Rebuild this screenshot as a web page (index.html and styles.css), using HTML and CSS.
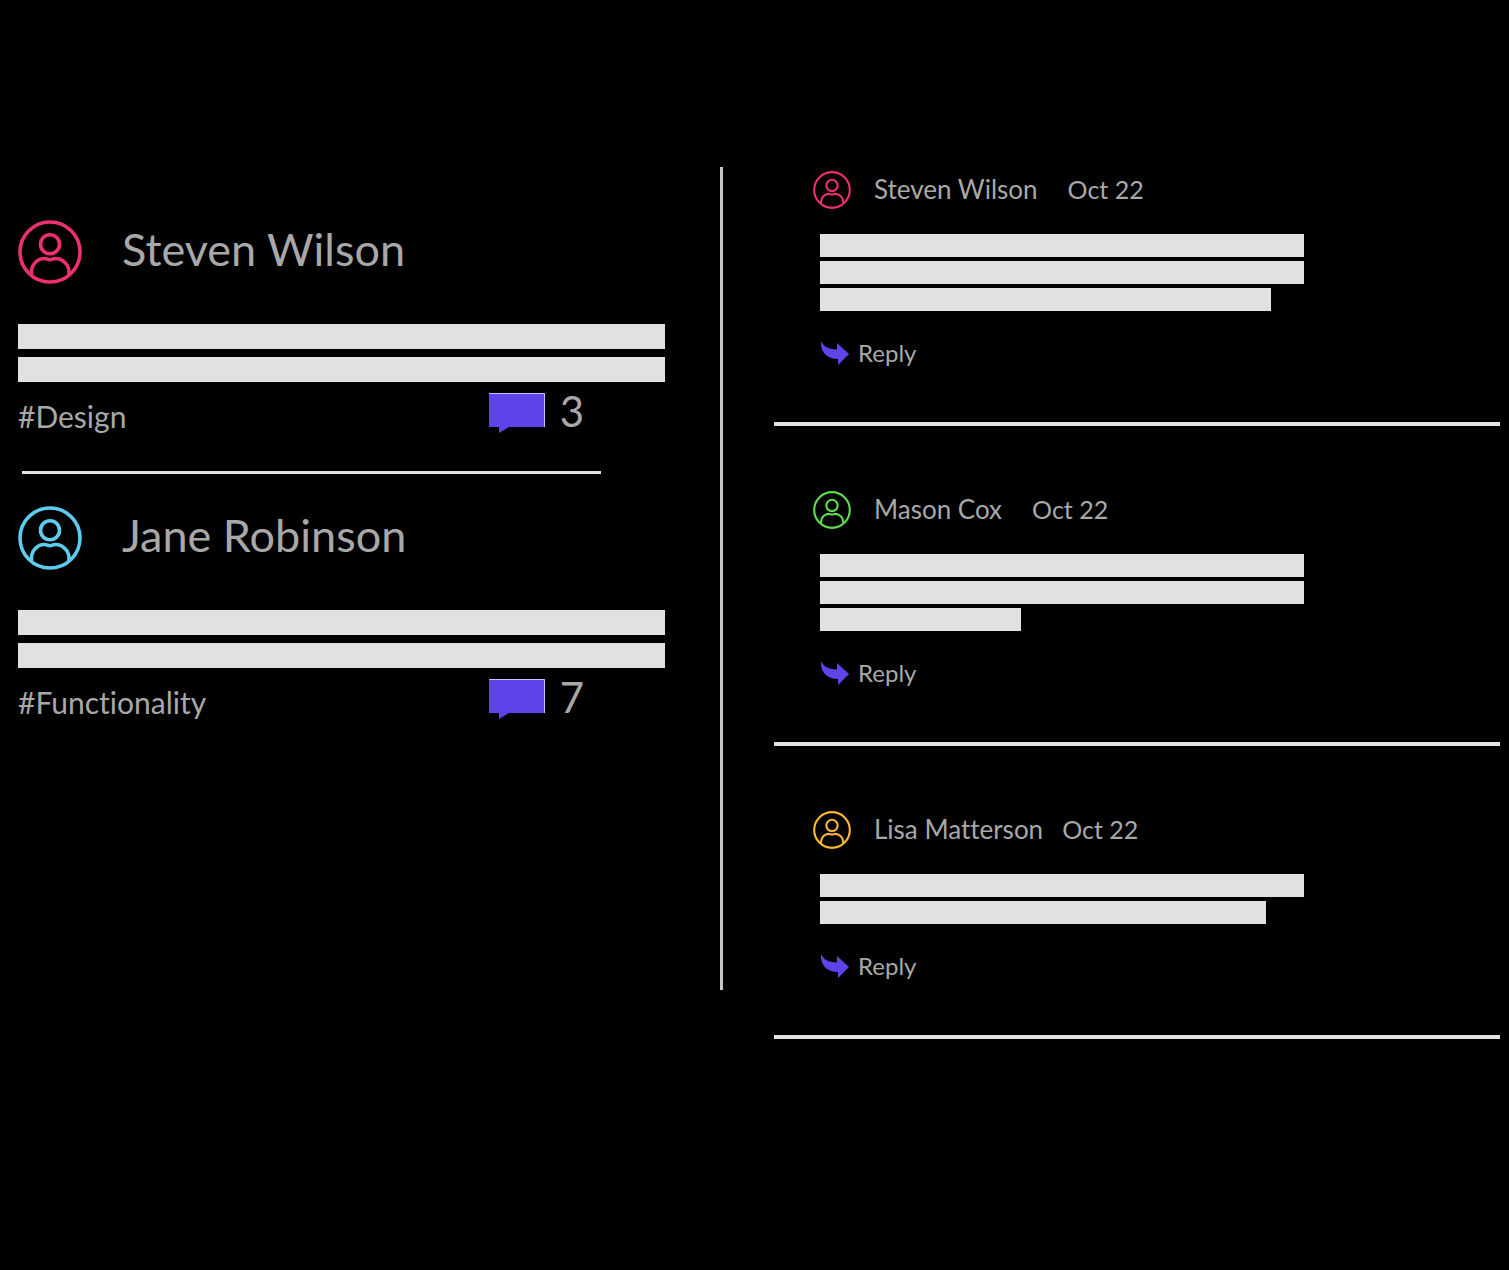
FILE: index.html
```html
<!DOCTYPE html>
<html lang="en">
<head>
<meta charset="utf-8">
<meta name="viewport" content="width=device-width, initial-scale=1">
<title>Discussion</title>
<link rel="stylesheet" href="styles.css">
</head>
<body>
<svg class="sprite" aria-hidden="true">
  <symbol id="avatar" viewBox="0 0 64 64">
    <g fill="none" stroke="currentColor" stroke-width="3.600">
      <circle cx="32" cy="32" r="30"/>
      <circle cx="32" cy="24.300" r="9.500"/>
      <path d="M13.500 54.500V52C13.500 44.500 19.500 38.500 26.500 38.500C29 38.500 30 39.700 32 39.700S35 38.500 37.500 38.500C44.500 38.500 51 44.500 51 52V54.500"/>
    </g>
  </symbol>
  <symbol id="bubble" viewBox="0 0 56 40">
    <path fill="#5f43e9" d="M0 0H56V34H20L10 40V34H0Z"/>
    <path fill="none" stroke="#c9c0fb" d="M0 .5H55.500V34"/>
  </symbol>
  <symbol id="reply" viewBox="0 0 29 24">
    <path fill="#5f43e9" d="M1 0C4 6 8 8 17 8.500V2L29 13L18 24V18C7 18 0 11 1 0Z"/>
  </symbol>
</svg>
<main class="board">
  <section class="posts">
    <article class="post">
      <header class="post-head">
        <svg class="avatar pink" aria-hidden="true"><use href="#avatar"/></svg>
        <h2 class="post-name">Steven Wilson</h2>
      </header>
      <div class="post-lines"><span class="line"></span><span class="line"></span></div>
      <footer class="post-foot">
        <a class="tag" href="#design">#Design</a>
        <button class="count" type="button" aria-label="3 comments"><svg class="bubble" aria-hidden="true"><use href="#bubble"/></svg>3</button>
      </footer>
    </article>
    <hr class="post-rule">
    <article class="post">
      <header class="post-head">
        <svg class="avatar blue" aria-hidden="true"><use href="#avatar"/></svg>
        <h2 class="post-name">Jane Robinson</h2>
      </header>
      <div class="post-lines"><span class="line"></span><span class="line"></span></div>
      <footer class="post-foot">
        <a class="tag" href="#functionality">#Functionality</a>
        <button class="count" type="button" aria-label="7 comments"><svg class="bubble" aria-hidden="true"><use href="#bubble"/></svg>7</button>
      </footer>
    </article>
  </section>
  <section class="comments">
    <article class="comment">
      <header class="comment-head">
        <svg class="avatar small pink" aria-hidden="true"><use href="#avatar"/></svg>
        <h3 class="comment-name">Steven Wilson</h3>
        <time class="date">Oct 22</time>
      </header>
      <div class="comment-lines">
        <span class="line"></span><span class="line"></span><span class="line" style="width:93.2%"></span>
      </div>
      <button class="reply" type="button"><svg class="arrow" aria-hidden="true"><use href="#reply"/></svg>Reply</button>
    </article>
    <article class="comment">
      <header class="comment-head">
        <svg class="avatar small green" aria-hidden="true"><use href="#avatar"/></svg>
        <h3 class="comment-name">Mason Cox</h3>
        <time class="date">Oct 22</time>
      </header>
      <div class="comment-lines">
        <span class="line"></span><span class="line"></span><span class="line" style="width:41.5%"></span>
      </div>
      <button class="reply" type="button"><svg class="arrow" aria-hidden="true"><use href="#reply"/></svg>Reply</button>
    </article>
    <article class="comment">
      <header class="comment-head tight">
        <svg class="avatar small amber" aria-hidden="true"><use href="#avatar"/></svg>
        <h3 class="comment-name">Lisa Matterson</h3>
        <time class="date">Oct 22</time>
      </header>
      <div class="comment-lines">
        <span class="line"></span><span class="line" style="width:92.1%"></span>
      </div>
      <button class="reply" type="button"><svg class="arrow" aria-hidden="true"><use href="#reply"/></svg>Reply</button>
    </article>
  </section>
</main>
</body>
</html>
```
FILE: styles.css
```css
* {
  box-sizing: border-box;
}

body {
  margin: 0;
  background: #000;
  color: #a8a8a8;
  font-family: Lato, "Open Sans", sans-serif;
  font-variant-ligatures: none;
}

h2,
h3 {
  margin: 0;
  font-weight: 400;
}

button {
  padding: 0;
  border: 0;
  background: none;
  color: inherit;
  font-family: inherit;
  cursor: pointer;
}

.sprite {
  display: none;
}

.board {
  display: grid;
  grid-template-columns: 723fr 786fr;
  padding-top: 167px;
}

/* Posts */

.posts {
  margin-bottom: 49px;
  padding: 53px 55px 0 18px;
  border-right: 3px solid #c6c6c6;
}

.post-head {
  display: flex;
  align-items: center;
  gap: 40px;
}

.avatar {
  flex: none;
  width: 64px;
  height: 64px;
}

.pink { color: #ed2f6f; }
.blue { color: #5dcdef; }
.green { color: #5edc4c; }
.amber { color: #fbb534; }

.post-name {
  padding-bottom: 6px;
  font-size: 45px;
  line-height: 58px;
}

.line {
  display: block;
  background: #e1e1e1;
}

.post-lines {
  display: grid;
  gap: 8px;
  margin-top: 40px;
}

.post-lines .line {
  height: 25px;
}

.post-foot {
  display: flex;
  justify-content: space-between;
  align-items: flex-start;
  margin-top: 11px;
  padding-right: 81px;
}

.tag {
  height: 40px;
  color: inherit;
  font-size: 30px;
  line-height: 46px;
  text-decoration: none;
}

.count {
  display: flex;
  align-items: flex-start;
  gap: 15px;
  height: 40px;
  font-size: 42px;
  line-height: 36px;
}

.bubble {
  width: 56px;
  height: 40px;
}

.post-rule {
  height: 3px;
  margin: 38px 64px 32px 4px;
  border: 0;
  background: #e1e1e1;
}

/* Comments */

.comments {
  padding: 4px 9px 0 51px;
}

.comment {
  padding: 0 0 57px 46px;
  border-bottom: 4px solid #e4e4e4;
}

.comment + .comment {
  margin-top: 65px;
}

.comment-head {
  display: flex;
  align-items: center;
  gap: 30px;
  margin-left: -7px;
}

.comment-head.tight {
  gap: 19px;
}

.small {
  width: 38px;
  height: 38px;
}

.small + .comment-name {
  margin-left: -7px;
}

.tight .small + .comment-name {
  margin-left: 4px;
}

.comment-name,
.date {
  padding-bottom: 2px;
  font-size: 26px;
  line-height: 36px;
}

.date {
  font-size: 25px;
}

.comment-lines {
  display: grid;
  gap: 4px;
  margin-top: 25px;
  padding-right: 196px;
}

.comment-lines .line {
  height: 23px;
}

.reply {
  display: flex;
  align-items: center;
  gap: 9px;
  height: 24px;
  margin-top: 30px;
  font-size: 24px;
  line-height: 24px;
}

.arrow {
  width: 29px;
  height: 24px;
}
```
